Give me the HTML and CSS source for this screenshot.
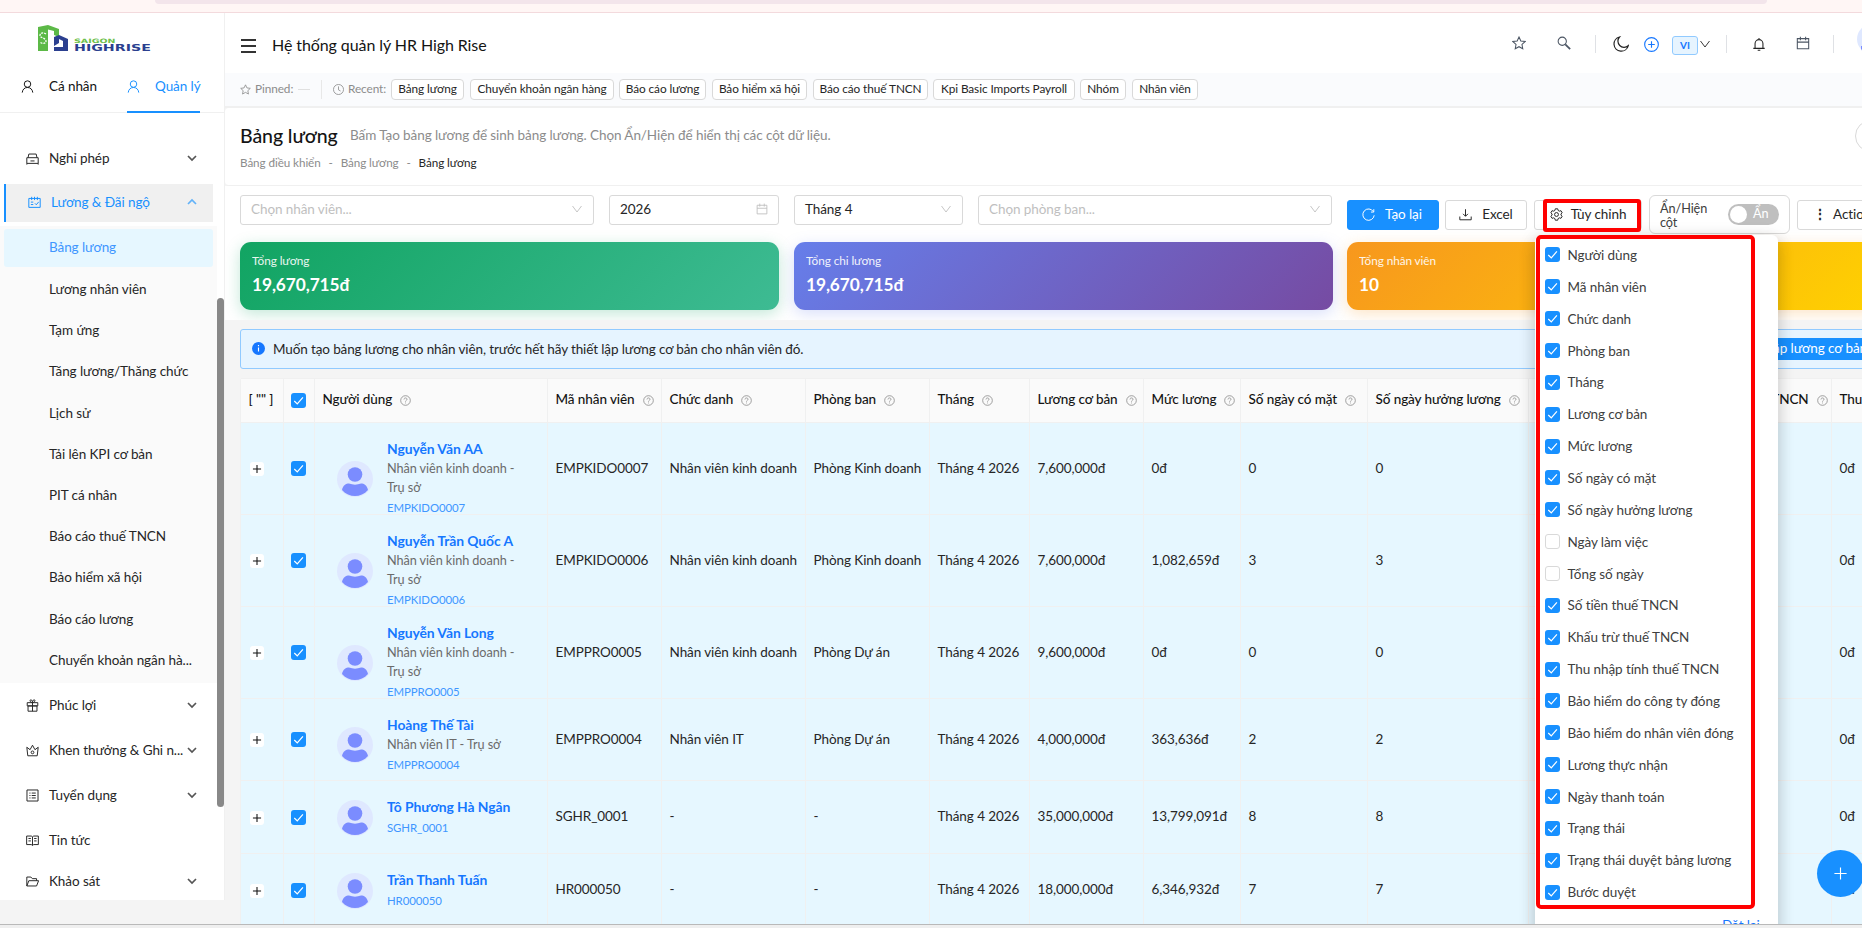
FILE: index.html
```
<!DOCTYPE html>
<html lang="vi">
<head>
    <meta charset="UTF-8">
    <meta name="viewport" content="width=device-width, initial-scale=1.0">
    <title>Bảng lương</title>
    <link rel="stylesheet" href="styles.css">
</head>
<body>
    <svg class="sprite">
        <symbol id="i-user" viewBox="0 0 16 16"><circle cx="8" cy="5" r="4"/><path d="M1.5 15.5c.4-4 3-6.3 6.500-6.300s6.100 2.300 6.500 6.300"/></symbol>
        <symbol id="i-down" viewBox="0 0 16 16"><path d="M2 4l6 8 6-8"/></symbol>
        <symbol id="i-arrow" viewBox="0 0 10 10"><path d="M1 3l4 4 4-4"/></symbol>
        <symbol id="i-star" viewBox="0 0 16 16"><path d="M8 1.200l2.100 4.500 4.900.6-3.600 3.400.9 4.900L8 12.200l-4.300 2.400.9-4.900L1 6.300l4.900-.6z"/></symbol>
        <symbol id="i-cal" viewBox="0 0 16 16"><path d="M1.500 3h13v11.500h-13zM1.500 7h13M5 .8v4M11 .8v4"/></symbol>
        <symbol id="i-help" viewBox="0 0 16 16"><circle cx="8" cy="8" r="7"/><path d="M5.800 6.500c0-3 4.400-2.800 4.400-.2 0 1.600-2.200 1.500-2.200 3.300M8 11v1.200"/></symbol>
        <symbol id="i-check" viewBox="0 0 16 16"><path d="M3.500 8.500l3.200 3.200 6-7"/></symbol>
        <symbol id="i-car" viewBox="0 0 16 16"><path d="M2.500 7l1-4.500h9l1 4.500M1 7h14v7H1zM1 14v1.500M15 14v1.500M5.500 11h5"/></symbol>
        <symbol id="i-sched" viewBox="0 0 16 16"><path d="M1 3h14v11H1zM4.500 1v4M8 1v4M11.500 1v4M3.500 7.500h3M3.500 10.500h3M8.500 9l1.700 1.800 3-3.600"/></symbol>
        <symbol id="i-gift" viewBox="0 0 16 16"><path d="M1.500 4.500h13v4h-13zM2.500 8.500h11v6.500h-11zM8 4.500V15M8 4.500C5 4.500 4 1 6 1s2 3.500 2 3.500S8 1 10 1s1 3.500-2 3.500"/></symbol>
        <symbol id="i-crown" viewBox="0 0 16 16"><path d="M2.200 14.500L1 4l4 3 3-5.500L11 7l4-3-1.200 10.500z"/><circle cx="8" cy="10.300" r="1.700"/></symbol>
        <symbol id="i-list" viewBox="0 0 16 16"><path d="M1.200 1.200h13.600v13.600H1.200zM7 5h5M7 8h5M7 11h5M4.200 5h1.300M4.200 8h1.300M4.200 11h1.300"/></symbol>
        <symbol id="i-book" viewBox="0 0 16 16"><path d="M.8 2.500h5.700L8 3.500l1.500-1h5.700v10.500H9.500L8 14l-1.500-1H.8zM8 3.500V14M3 5.500h3M3 8.500h3M10 5.500h3M10 8.500h3"/></symbol>
        <symbol id="i-folder" viewBox="0 0 16 16"><path d="M1 13.500V2.500h5l1.800 2H13V7M1 13.500L3.500 7H15.500L13 13.500z"/></symbol>
        <symbol id="i-gear" viewBox="0 0 16 16"><circle cx="8" cy="8" r="2.400"/><path d="M6.500 1h3l.5 2 1.500.9 2-.6 1.500 2.600L13.500 7.300v1.500l1.500 1.400-1.500 2.500-2-.6-1.500.9-.5 2h-3l-.5-2-1.500-.9-2 .6L1 10.200l1.500-1.400V7.300L1 5.900l1.500-2.600 2 .6L6 3z"/></symbol>
        <symbol id="i-plus" viewBox="0 0 16 16"><path d="M8 1.500v13M1.500 8h13"/></symbol>
    </svg>

    <div class="browserBar"><div class="addressBar"></div></div>

    <div class="app">
        <aside class="sidebar">
            <div class="logo">
                <svg class="logoMark" viewBox="0 0 30 26">
                    <path d="M0 2l10-2 11 4v8l-5-2V6l-6-1.500V26H0z" fill="#5cb947"/>
                    <path d="M16 12l5-2 9 4v12H16v-4h9v-6l-4-2v4l-5 3z" fill="#2b3f8f"/>
                    <path d="M8 9c-3-2-6-1-6 1.500S8 13 8 16s-4 3-6 1" fill="none" stroke="#fff" stroke-width="1.300" stroke-dasharray="2 1"/>
                </svg>
                <div class="logoText"><span class="saigon">SAIGON</span><span class="highrise">HIGHRISE</span></div>
            </div>
            <div class="tabs">
                <div class="tab"><svg class="icon"><use href="#i-user"/></svg>Cá nhân</div>
                <div class="tab active"><svg class="icon"><use href="#i-user"/></svg>Quản lý</div>
            </div>
            <div class="menu">
                <div class="menuItem"><svg class="icon"><use href="#i-car"/></svg><span>Nghỉ phép</span><svg class="arrow"><use href="#i-arrow"/></svg></div>
                <div class="menuItem open"><svg class="icon"><use href="#i-sched"/></svg><span>Lương &amp; Đãi ngộ</span><svg class="arrow"><use href="#i-arrow"/></svg></div>
                <div class="subMenu">
                    <div class="subItem active">Bảng lương</div>
                    <div class="subItem">Lương nhân viên</div>
                    <div class="subItem">Tạm ứng</div>
                    <div class="subItem">Tăng lương/Thăng chức</div>
                    <div class="subItem">Lịch sử</div>
                    <div class="subItem">Tải lên KPI cơ bản</div>
                    <div class="subItem">PIT cá nhân</div>
                    <div class="subItem">Báo cáo thuế TNCN</div>
                    <div class="subItem">Bảo hiểm xã hội</div>
                    <div class="subItem">Báo cáo lương</div>
                    <div class="subItem">Chuyển khoản ngân hà...</div>
                </div>
                <div class="menuItem"><svg class="icon"><use href="#i-gift"/></svg><span>Phúc lợi</span><svg class="arrow"><use href="#i-arrow"/></svg></div>
                <div class="menuItem"><svg class="icon"><use href="#i-crown"/></svg><span>Khen thưởng &amp; Ghi n...</span><svg class="arrow"><use href="#i-arrow"/></svg></div>
                <div class="menuItem"><svg class="icon"><use href="#i-list"/></svg><span>Tuyển dụng</span><svg class="arrow"><use href="#i-arrow"/></svg></div>
                <div class="menuItem"><svg class="icon"><use href="#i-book"/></svg><span>Tin tức</span></div>
                <div class="menuItem last"><svg class="icon"><use href="#i-folder"/></svg><span>Khảo sát</span><svg class="arrow"><use href="#i-arrow"/></svg></div>
                <div class="scrollbar"></div>
            </div>
        </aside>

        <main class="main">
            <header class="topbar">
                <div class="burger"><i></i><i></i><i></i></div>
                <div class="appName">Hệ thống quản lý HR High Rise</div>
                <div class="tools">
                    <svg class="tool star"><use href="#i-star"/></svg>
                    <svg class="tool search" viewBox="0 0 16 16"><circle cx="6" cy="6" r="4.700"/><path d="M9.500 9.500l5.500 5.500" stroke-width="2"/></svg>
                    <i class="line"></i>
                    <svg class="tool moon" viewBox="0 0 16 16"><path d="M6.500 1A7.200 7.200 0 1 0 15.200 9.800 6.200 6.200 0 0 1 6.500 1z"/></svg>
                    <svg class="tool add" viewBox="0 0 16 16"><circle cx="8" cy="8" r="7.300"/><path d="M8 4.500v7M4.500 8h7"/></svg>
                    <span class="lang">VI</span>
                    <svg class="tool langArrow"><use href="#i-down"/></svg>
                    <i class="line"></i>
                    <svg class="tool bell" viewBox="0 0 16 16"><path d="M1.500 13h13M3.500 13V7.500a4.500 4.500 0 0 1 9 0V13M8 3V1M6.500 15.200h3"/></svg>
                    <svg class="tool cal"><use href="#i-cal"/></svg>
                    <i class="line"></i>
                    <span class="me"></span>
                </div>
            </header>

            <div class="recentBar">
                <svg class="icon"><use href="#i-star"/></svg><span class="pinned">Pinned:</span><i class="dash"></i><i class="line"></i>
                <svg class="icon clock" viewBox="0 0 16 16"><circle cx="8" cy="8" r="7.300"/><path d="M8 3.500v5l3 1.700"/></svg><span class="recent">Recent:</span>
                <div class="chips">
                    <span>Bảng lương</span>
                    <span>Chuyển khoản ngân hàng</span>
                    <span>Báo cáo lương</span>
                    <span>Bảo hiểm xã hội</span>
                    <span>Báo cáo thuế TNCN</span>
                    <span>Kpi Basic Imports Payroll</span>
                    <span>Nhóm</span>
                    <span>Nhân viên</span>
                </div>
            </div>

            <div class="pageHead">
                <div class="titleRow"><h1>Bảng lương</h1><p>Bấm Tạo bảng lương để sinh bảng lương. Chọn Ẩn/Hiện để hiển thị các cột dữ liệu.</p></div>
                <div class="crumbs"><span>Bảng điều khiển</span><i>-</i><span>Bảng lương</span><i>-</i><b>Bảng lương</b></div>
                <div class="roundBtn"></div>
            </div>

            <div class="filterBox">
                <div class="filters">
                    <div class="field wide hint">Chọn nhân viên...<svg class="icon"><use href="#i-down"/></svg></div>
                    <div class="field">2026<svg class="icon"><use href="#i-cal"/></svg></div>
                    <div class="field month">Tháng 4<svg class="icon"><use href="#i-down"/></svg></div>
                    <div class="field wide hint">Chọn phòng ban...<svg class="icon"><use href="#i-down"/></svg></div>
                    <div class="buttons">
                        <div class="btn primary"><svg class="icon" viewBox="0 0 16 16"><path d="M14 4.500A7 7 0 1 0 15 9M14.500 1.500v3.500H11"/></svg>Tạo lại</div>
                        <div class="btn excel"><svg class="icon" viewBox="0 0 16 16"><path d="M8 1.500v8.500M5 7.200l3 3 3-3M1 10.500v4h14v-4"/></svg>Excel</div>
                        <div class="btn custom"><svg class="icon"><use href="#i-gear"/></svg>Tùy chỉnh</div>
                        <div class="toggleBox"><span>Ẩn/Hiện cột</span><div class="switch"><i></i>Ẩn</div></div>
                        <div class="btn action"><b>⋮</b>Action</div>
                    </div>
                </div>
                <div class="cards">
                    <div class="card green"><p>Tổng lương</p><strong>19,670,715đ</strong></div>
                    <div class="card purple"><p>Tổng chi lương</p><strong>19,670,715đ</strong></div>
                    <div class="card orange"><p>Tổng nhân viên</p><strong>10</strong></div>
                </div>
            </div>

            <div class="alert">
                <svg class="info" viewBox="0 0 16 16"><circle cx="8" cy="8" r="8" fill="#1677ff" stroke="none"/><path d="M8 6.800v5M8 3.800v1.500" stroke="#fff" stroke-width="1.400"/></svg>
                <span>Muốn tạo bảng lương cho nhân viên, trước hết hãy thiết lập lương cơ bản cho nhân viên đó.</span>
                <div class="alertBtn">Thiết lập lương cơ bản</div>
            </div>

            <table class="payroll">
                <colgroup>
                    <col class="c1"><col class="c2"><col class="c3"><col class="c4"><col class="c5"><col class="c6"><col class="c7"><col class="c8"><col class="c9"><col class="c10"><col class="c11"><col class="c12"><col class="c13"><col class="c14">
                </colgroup>
                <thead><tr id="head"></tr></thead>
                <tbody id="rows"></tbody>
            </table>
        </main>

        <div class="dropdown">
            <div id="columns"></div>
            <div class="reset">Đặt lại</div>
        </div>
        <div class="mark markButton"></div>
        <div class="mark markList"></div>
        <div class="fab"><svg><use href="#i-plus"/></svg></div>
    </div>

    <div class="bottomBar"></div>

    <script src="script.js"></script>
</body>
</html>
```
FILE: styles.css
```
* {
    box-sizing: border-box;
}
body {
    margin: 0;
    height: 928px;
    overflow: hidden;
    background-color: #f4f4f4;
    color: #262626;
    font-family: Lato, "Noto Sans", sans-serif;
    font-size: 13.5px;
    letter-spacing: -0.08px;
    white-space: nowrap;
}
h1, p {
    margin: 0;
}
i {
    font-style: normal;
}
svg {
    fill: none;
    stroke: currentColor;
    stroke-width: 1.2;
    flex: none;
}
.sprite {
    display: none;
}
.icon {
    width: 13px;
    height: 13px;
}
.browserBar {
    height: 13px;
    background-color: #fff6f5;
    border-bottom: 1px solid #f3dadd;
}
.addressBar {
    height: 4px;
    margin: 0 95px 0 155px;
    background-color: #f3e5eb;
    border-radius: 0 0 16px 16px;
}
.app {
    position: relative;
    display: flex;
    height: 911px;
    overflow: hidden;
}
.bottomBar {
    height: 4px;
    background-color: #efefef;
    border-top: 1px solid #b9b9b9;
}

/* sidebar */
.sidebar {
    width: 225px;
    height: 887px;
    flex: none;
    background-color: #fff;
    border-right: 1px solid #f0f0f0;
}
.logo {
    display: flex;
    height: 52px;
    padding: 12px 0 0 38px;
}
.logoMark {
    width: 30px;
    height: 26px;
    stroke: none;
}
.logoText {
    display: flex;
    flex-direction: column;
    padding: 13px 0 0 6px;
    font-family: "DejaVu Sans", sans-serif;
    font-weight: bold;
}
.saigon, .highrise {
    letter-spacing: 0;
    transform: scaleX(1.58);
    transform-origin: left;
}
.saigon {
    color: #6cc04a;
    font-size: 6px;
    line-height: 6px;
}
.highrise {
    margin-top: 1px;
    color: #2b3f8f;
    font-size: 9px;
    line-height: 7px;
}
.tabs {
    display: flex;
    height: 48px;
    padding-left: 21px;
    border-bottom: 1px solid #f0f0f0;
}
.tab {
    display: flex;
    align-items: center;
    gap: 15px;
    width: 76px;
    height: 48px;
    margin-right: 30px;
    padding-bottom: 6px;
    color: #141414;
}
.tab.active {
    width: 73px;
    margin: 0;
    color: #1890ff;
    border-bottom: 2px solid #1890ff;
    padding-bottom: 4px;
}
.menu {
    position: relative;
    height: 787px;
    padding-top: 26px;
    overflow: hidden;
}
.menuItem {
    display: flex;
    align-items: center;
    width: 209px;
    height: 38px;
    margin: 0 0 7px 4px;
    padding: 0 0 0 22px;
}
.menuItem span {
    width: 138px;
    margin-left: 10px;
}
.menuItem .arrow {
    width: 10px;
    height: 10px;
    stroke-width: 1.7;
    color: #555;
}
.menuItem.open {
    margin-bottom: 4px;
    padding-bottom: 2px;
    background-color: #f0f0f0;
    border-left: 2px solid #1890ff;
    color: #1890ff;
}
.menuItem.open span {
    width: 136px;
}
.menuItem.open .arrow {
    color: #62b2f8;
    transform: scaleY(-1);
}
.menuItem.last {
    margin-top: -4px;
}
.subMenu {
    width: 217px;
    height: 457px;
    margin-bottom: 3px;
    padding-top: 3px;
    background-color: #fafafa;
}
.subItem {
    height: 41.2px;
    padding-left: 49px;
    line-height: 43px;
}
.subItem.active {
    width: 209px;
    height: 38px;
    margin: 0 0 1px 4px;
    padding-left: 45px;
    line-height: 37px;
    color: #4096ff;
    background-color: #e6f7ff;
    border-radius: 3px;
}
.scrollbar {
    position: absolute;
    top: 185px;
    right: 0;
    width: 7px;
    height: 509px;
    background-color: #888;
    border-radius: 4px;
}

/* header */
.main {
    width: 1661px;
    flex: none;
}
.topbar {
    display: flex;
    height: 60px;
    padding-left: 16px;
    background-color: #fff;
}
.burger {
    width: 15px;
    flex: none;
    margin: 26px 16px 0 0;
}
.burger i {
    display: block;
    height: 2px;
    margin-bottom: 4px;
    background-color: #333;
}
.appName {
    width: 1240px;
    flex: none;
    color: #141414;
    font-size: 16px;
    line-height: 63px;
}
.tools {
    display: flex;
    align-items: center;
    height: 62px;
}
.tool {
    width: 14px;
    height: 14px;
    color: #4b5563;
}
.tools .line {
    width: 1px;
    height: 18px;
    flex: none;
    background-color: #dfe1e5;
}
.tool.star {
    margin: -2px 31px 0 0;
}
.tool.search {
    margin: -2px 24px 0 0;
}
.tool.moon {
    width: 16px;
    height: 16px;
    margin: 0 15px 0 17px;
    color: #222;
}
.tool.add {
    width: 15px;
    height: 15px;
    color: #1677ff;
}
.lang {
    width: 26px;
    height: 19px;
    flex: none;
    margin: 3px 1px 0 13px;
    color: #1677ff;
    background-color: #e6f4ff;
    border: 1px solid #91caff;
    border-radius: 3px;
    font-size: 10px;
    font-weight: bold;
    line-height: 16px;
    text-align: center;
}
.tool.langArrow {
    width: 12px;
    height: 12px;
    margin-right: 15px;
    color: #222;
}
.tool.bell {
    margin: 0 30px 0 25px;
    color: #222;
}
.tool.cal {
    margin: -2px 23px 0 0;
}
.me {
    width: 30px;
    height: 30px;
    flex: none;
    margin: -10px 0 0 23px;
    border-radius: 50%;
    background: radial-gradient(circle at 15px 28px, #7b8cff 12px, #dfe8ff 12px);
}
.recentBar {
    display: flex;
    align-items: center;
    height: 35px;
    padding-left: 15px;
    color: #8c8c8c;
    background-color: #fafbfd;
    border-bottom: 2px solid #f0f0f0;
    font-size: 11.8px;
}
.recentBar .icon {
    width: 11px;
    height: 11px;
}
.pinned {
    width: 40px;
    margin: -2px 3px 0 4px;
}
.dash {
    width: 12px;
    height: 1px;
    background-color: #e0e0e0;
}
.recentBar .line {
    width: 1px;
    height: 19px;
    margin: 0 11px;
    background-color: #e8e8e8;
}
.recent {
    width: 43px;
    margin: -2px 0 0 4px;
}
.chips {
    display: flex;
    gap: 6px;
}
.chips span {
    width: 73px;
    height: 21px;
    color: #262626;
    background-color: #fff;
    border: 1px solid #d9d9d9;
    border-radius: 4px;
    line-height: 17px;
    text-align: center;
}
.chips span:nth-child(2) { width: 144px; }
.chips span:nth-child(3) { width: 87px; margin-left: -1px; }
.chips span:nth-child(4) { width: 95px; }
.chips span:nth-child(5) { width: 115px; }
.chips span:nth-child(6) { width: 142px; margin-left: -1px; }
.chips span:nth-child(7) { width: 46px; margin-left: -1px; }
.chips span:nth-child(8) { width: 66px; }

.pageHead {
    position: relative;
    height: 78px;
    padding: 14px 0 0 15px;
    background-color: #fff;
    border-bottom: 1px solid #f0f0f0;
    border-radius: 4px;
}
.titleRow {
    display: flex;
    align-items: center;
    height: 26px;
}
.titleRow h1 {
    width: 110px;
    color: #141414;
    font-size: 19.5px;
    font-weight: 500;
}
.titleRow p {
    color: #8c8c8c;
}
.crumbs {
    display: flex;
    height: 26px;
    color: #8c8c8c;
    font-size: 11.7px;
    line-height: 29px;
}
.crumbs i {
    width: 20px;
    text-align: center;
}
.crumbs b {
    color: #262626;
    font-weight: normal;
}
.roundBtn {
    position: absolute;
    top: 12px;
    left: 1630px;
    width: 32px;
    height: 32px;
    border: 1px solid #d9d9d9;
    border-radius: 50%;
}

/* filters and totals */
.filterBox {
    height: 134px;
    padding: 9px 0 0 15px;
    background-color: #fff;
    overflow: hidden;
}
.filters {
    display: flex;
    gap: 15px;
    height: 47px;
}
.field {
    display: flex;
    flex: none;
    align-items: center;
    justify-content: space-between;
    width: 170px;
    height: 30px;
    padding: 0 10px 2px;
    border: 1px solid #d9d9d9;
    border-radius: 3px;
}
.field.wide {
    width: 354px;
}
.field.month {
    width: 169px;
}
.hint {
    color: #bfbfbf;
}
.field .icon {
    color: #bfbfbf;
    width: 12px;
    height: 12px;
}
.buttons {
    display: flex;
    flex: none;
    gap: 7px;
}
.btn {
    display: flex;
    flex: none;
    align-items: center;
    justify-content: center;
    gap: 10px;
    height: 30px;
    margin-top: 5px;
    padding-bottom: 2px;
    border: 1px solid #d9d9d9;
    border-radius: 3px;
}
.btn.primary {
    width: 92px;
    margin-right: -1px;
    padding-right: 2px;
    color: #fff;
    background-color: #1890ff;
    border-color: #1890ff;
}
.btn.excel {
    width: 82px;
}
.btn.custom {
    width: 108px;
    gap: 8px;
}
.btn.action {
    width: 103px;
    justify-content: flex-start;
    padding-left: 15px;
    gap: 8px;
}
.btn.action b {
    width: 12px;
    text-align: center;
}
.toggleBox {
    display: flex;
    flex: none;
    align-items: center;
    width: 141px;
    height: 39px;
    padding: 0 10px;
    border: 1px solid #d9d9d9;
    border-radius: 6px;
    color: #404040;
    font-size: 12.7px;
    line-height: 14px;
    white-space: normal;
}
.toggleBox span {
    width: 68px;
    padding-right: 15px;
}
.switch {
    position: relative;
    width: 51px;
    height: 21px;
    padding-left: 25px;
    color: #fff;
    background-color: #bfbfbf;
    border-radius: 11px;
    line-height: 18px;
}
.switch i {
    position: absolute;
    top: 2px;
    left: 2px;
    width: 17px;
    height: 17px;
    background-color: #fff;
    border-radius: 50%;
}
.cards {
    display: flex;
    gap: 15px;
}
.card {
    width: 539px;
    height: 68px;
    flex: none;
    padding: 10px 12px;
    color: #fff;
    border-radius: 11px;
}
.card.orange {
    margin-left: -1px;
}
.card p {
    font-size: 11.8px;
    line-height: 17px;
    opacity: .9;
}
.card strong {
    font-size: 17.3px;
    font-weight: bold;
    line-height: 31px;
}
.green {
    background: linear-gradient(135deg, #11a462, #3ebb93);
    box-shadow: 0 4px 15px rgba(17, 164, 98, .25);
}
.purple {
    background: linear-gradient(135deg, #667eea, #764ba2);
    box-shadow: 0 4px 15px rgba(102, 126, 234, .25);
}
.orange {
    background: linear-gradient(135deg, #f7971e, #ffd200);
    box-shadow: 0 4px 15px rgba(247, 151, 30, .25);
}
.alert {
    display: flex;
    align-items: center;
    height: 40px;
    margin: 9px 0 0 15px;
    padding: 0 0 1px 11px;
    background-color: #e6f4ff;
    border: 1px solid #91caff;
    border-radius: 3px;
}
.alert span {
    letter-spacing: -0.12px;
}
.info {
    width: 13px;
    height: 13px;
    margin-right: 8px;
}
.alertBtn {
    height: 22px;
    margin: 0 10px 0 auto;
    padding: 0 8px;
    color: #fff;
    background-color: #1890ff;
    border-radius: 2px;
    line-height: 20px;
}

/* payroll table */
.payroll {
    width: 1751px;
    margin: 9px 0 0 15px;
    border-collapse: separate;
    border-spacing: 0;
    border-left: 1px solid #f0f0f0;
    border-radius: 4px;
    table-layout: fixed;
}
.c1 { width: 43px; }
.c2 { width: 31px; }
.c3 { width: 233px; }
.c4 { width: 114px; }
.c5 { width: 144px; }
.c6 { width: 124px; }
.c7 { width: 100px; }
.c8 { width: 114px; }
.c9 { width: 97px; }
.c10 { width: 127px; }
.c11 { width: 161px; }
.c12 { width: 150px; }
.c13 { width: 153px; }
.c14 { width: 160px; }
.payroll th {
    height: 45px;
    padding: 0 7.5px 3px;
    color: #141414;
    background-color: #fafafa;
    border: solid #f0f0f0;
    border-width: 1px 1px 1px 0;
    font-weight: 500;
    text-align: left;
}
.payroll th .icon {
    width: 11px;
    height: 11px;
    margin: 0 0 -2px 8px;
    color: #8c8c8c;
}
.payroll td {
    padding: 0 7.5px 2px;
    background-color: #e6f7ff;
    border: solid #f0f0f0;
    border-width: 0 1px 1px 0;
}
.h92 td { height: 92px; }
.h82 td { height: 82px; }
.h73 td { height: 73px; }
.payroll .pick {
    padding: 0 0 0 7px;
}
.payroll .expand {
    padding: 1px 0 0 9px;
}
.expand i {
    display: block;
    width: 14px;
    height: 14px;
    background-color: #fff;
    border-radius: 3px;
}
.expand svg {
    display: block;
    width: 14px;
    height: 14px;
    padding: 2px;
    color: #111;
    stroke-width: 1.7;
}
.checkbox {
    display: block;
    width: 15px;
    height: 15px;
    color: #fff;
    background-color: #1890ff;
    border-radius: 3px;
    stroke-width: 1.3;
    flex: none;
}
.checkbox.off {
    color: transparent;
    background-color: #fff;
    border: 1px solid #d9d9d9;
}
.payroll .person {
    padding: 16px 0 0 22px;
    vertical-align: top;
}
.personBox {
    display: flex;
    align-items: center;
    min-height: 79px;
    margin-bottom: -8px;
}
.h82 .personBox { min-height: 60px; }
.h73 .personBox { min-height: 41px; }
.avatar {
    width: 36px;
    height: 36px;
    margin-right: 14px;
    stroke: none;
}
.person b {
    display: block;
    color: #1677ff;
    font-size: 13.9px;
    line-height: 20px;
}
.person p {
    width: 135px;
    color: #6b6b6b;
    font-size: 12.7px;
    line-height: 19px;
    white-space: normal;
}
.person small {
    display: block;
    color: #4096ff;
    font-size: 11.4px;
    line-height: 21px;
}

/* overlays */
.dropdown {
    position: absolute;
    top: 222px;
    left: 1535px;
    width: 243px;
    height: 720px;
    padding: 4px 10px;
    background-color: #fff;
    border-radius: 6px;
    box-shadow: 0 6px 16px rgba(0, 0, 0, .12), 0 3px 18px rgba(0, 0, 0, .12);
}
.option {
    display: flex;
    align-items: center;
    gap: 7.5px;
    height: 31.87px;
    color: #404040;
}
.reset {
    margin: 9px 0 0 177px;
    color: #1677ff;
}
.mark {
    position: absolute;
    border: 4px solid #f00;
    border-radius: 3px;
}
.markButton {
    top: 186px;
    left: 1543px;
    width: 98px;
    height: 33px;
}
.markList {
    top: 222px;
    left: 1536px;
    width: 219px;
    height: 674px;
    border-radius: 5px;
}
.fab {
    position: absolute;
    top: 837px;
    left: 1817px;
    width: 47px;
    height: 47px;
    padding: 16px;
    color: #fff;
    background-color: #1890ff;
    border-radius: 50%;
}
.fab svg {
    display: block;
    width: 15px;
    height: 15px;
}
```
FILE: script.js
```
const headList = ['Người dùng', 'Mã nhân viên', 'Chức danh', 'Phòng ban', 'Tháng', 'Lương cơ bản', 'Mức lương', 'Số ngày có mặt', 'Số ngày hưởng lương', 'Số tiền thuế TNCN', 'Khấu trừ thuế TNCN', 'Thu nhập tính thuế TNCN']

const dataList = [
    { size: 'h92', name: 'Nguyễn Văn AA', desc: 'Nhân viên kinh doanh - Trụ sở', code: 'EMPKIDO0007', title: 'Nhân viên kinh doanh', dept: 'Phòng Kinh doanh', base: '7,600,000đ', pay: '0đ', days: 0 },
    { size: 'h92', name: 'Nguyễn Trần Quốc A', desc: 'Nhân viên kinh doanh - Trụ sở', code: 'EMPKIDO0006', title: 'Nhân viên kinh doanh', dept: 'Phòng Kinh doanh', base: '7,600,000đ', pay: '1,082,659đ', days: 3 },
    { size: 'h92', name: 'Nguyễn Văn Long', desc: 'Nhân viên kinh doanh - Trụ sở', code: 'EMPPRO0005', title: 'Nhân viên kinh doanh', dept: 'Phòng Dự án', base: '9,600,000đ', pay: '0đ', days: 0 },
    { size: 'h82', name: 'Hoàng Thế Tài', desc: 'Nhân viên IT - Trụ sở', code: 'EMPPRO0004', title: 'Nhân viên IT', dept: 'Phòng Dự án', base: '4,000,000đ', pay: '363,636đ', days: 2 },
    { size: 'h73', name: 'Tô Phương Hà Ngân', desc: '', code: 'SGHR_0001', title: '-', dept: '-', base: '35,000,000đ', pay: '13,799,091đ', days: 8 },
    { size: 'h73', name: 'Trần Thanh Tuấn', desc: '', code: 'HR000050', title: '-', dept: '-', base: '18,000,000đ', pay: '6,346,932đ', days: 7 },
]

const columnList = [...headList.slice(0, 9), 'Ngày làm việc', 'Tổng số ngày', ...headList.slice(9), 'Bảo hiểm do công ty đóng', 'Bảo hiểm do nhân viên đóng', 'Lương thực nhận', 'Ngày thanh toán', 'Trạng thái', 'Trạng thái duyệt bảng lương', 'Bước duyệt']
const hiddenList = ['Ngày làm việc', 'Tổng số ngày']

const checkbox = '<svg class="checkbox"><use href="#i-check"/></svg>'

document.getElementById('head').innerHTML = `<th>[ "" ]</th><th class="pick">${checkbox}</th>` +
    headList.map(name => `<th>${name}<svg class="icon"><use href="#i-help"/></svg></th>`).join('')

document.getElementById('rows').innerHTML = dataList.map(data => `
    <tr class="${data.size}">
        <td class="expand"><i><svg viewBox="0 0 16 16"><use href="#i-plus"/></svg></i></td>
        <td class="pick">${checkbox}</td>
        <td class="person">
            <div class="personBox">
                <svg class="avatar" viewBox="0 0 36 36"><circle cx="18" cy="18" r="18" fill="#dfe8ff"/><circle cx="18" cy="13.500" r="7.300" fill="#7b8cff"/><path d="M5 29c1-5 4-6.500 7-6.500 4 1.500 8 1.500 12 0 3 0 6 1.500 7 6.500-7 8-19 8-26 0z" fill="#7b8cff"/></svg>
                <div><b>${data.name}</b>${data.desc ? `<p>${data.desc}</p>` : ''}<small>${data.code}</small></div>
            </div>
        </td>
        <td>${data.code}</td>
        <td>${data.title}</td>
        <td>${data.dept}</td>
        <td>Tháng 4 2026</td>
        <td>${data.base}</td>
        <td>${data.pay}</td>
        <td>${data.days}</td>
        <td>${data.days}</td>
        <td>0đ</td>
        <td></td>
        <td>0đ</td>
    </tr>`).join('')

document.getElementById('columns').innerHTML = columnList.map(name => `
    <div class="option">${hiddenList.includes(name) ? '<i class="checkbox off"></i>' : checkbox}<span>${name}</span></div>`).join('')
```
